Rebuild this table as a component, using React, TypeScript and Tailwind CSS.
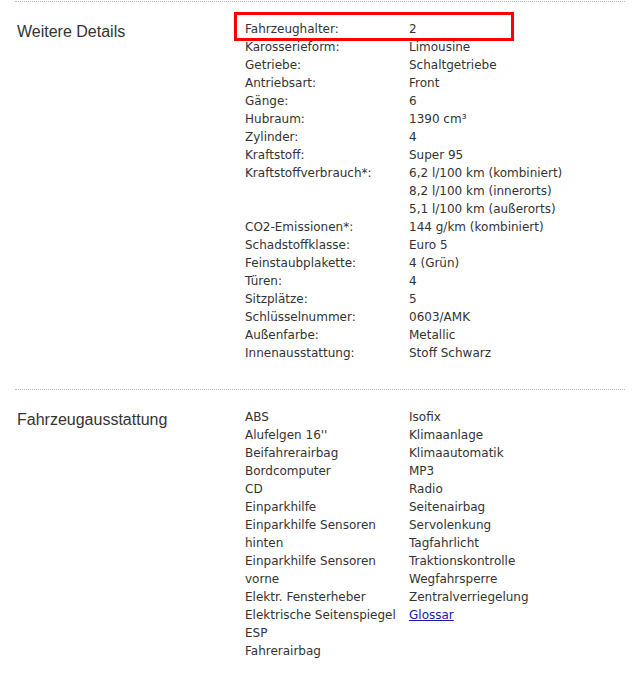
const details: [string, string[]][] = [
  ["Fahrzeughalter:", ["2"]],
  ["Karosserieform:", ["Limousine"]],
  ["Getriebe:", ["Schaltgetriebe"]],
  ["Antriebsart:", ["Front"]],
  ["Gänge:", ["6"]],
  ["Hubraum:", ["1390 cm³"]],
  ["Zylinder:", ["4"]],
  ["Kraftstoff:", ["Super 95"]],
  ["Kraftstoffverbrauch*:", ["6,2 l/100 km (kombiniert)", "8,2 l/100 km (innerorts)", "5,1 l/100 km (außerorts)"]],
  ["CO2-Emissionen*:", ["144 g/km (kombiniert)"]],
  ["Schadstoffklasse:", ["Euro 5"]],
  ["Feinstaubplakette:", ["4 (Grün)"]],
  ["Türen:", ["4"]],
  ["Sitzplätze:", ["5"]],
  ["Schlüsselnummer:", ["0603/AMK"]],
  ["Außenfarbe:", ["Metallic"]],
  ["Innenausstattung:", ["Stoff Schwarz"]],
];

const featuresLeft = [
  "ABS",
  "Alufelgen 16''",
  "Beifahrerairbag",
  "Bordcomputer",
  "CD",
  "Einparkhilfe",
  "Einparkhilfe Sensoren hinten",
  "Einparkhilfe Sensoren vorne",
  "Elektr. Fensterheber",
  "Elektrische Seitenspiegel",
  "ESP",
  "Fahrerairbag",
];

const featuresRight = [
  "Isofix",
  "Klimaanlage",
  "Klimaautomatik",
  "MP3",
  "Radio",
  "Seitenairbag",
  "Servolenkung",
  "Tagfahrlicht",
  "Traktionskontrolle",
  "Wegfahrsperre",
  "Zentralverriegelung",
];

export default function App() {
  return (
    <div className="relative w-[640px] h-[681px] bg-white text-[#333] font-['DejaVu_Sans',Verdana,sans-serif] text-[12px] leading-[18px]">
      <div className="mx-[15px] pt-px">
        {/* Weitere Details */}
        <div className="flex border-t border-dotted border-[#bbb] pt-[18px] pb-[27px]">
          <h2 className="w-[230px] shrink-0 pl-[2px] font-['Liberation_Sans',Arial,sans-serif] text-[16px] leading-[18px] text-[#333] pt-[3px]">
            Weitere Details
          </h2>
          <div className="grid grid-cols-[164px_1fr]">
            {details.map(([label, values]) => (
              <div key={label} className="contents">
                <div>{label}</div>
                <div>
                  {values.map((v) => (
                    <div key={v}>{v}</div>
                  ))}
                </div>
              </div>
            ))}
          </div>
        </div>

        {/* Fahrzeugausstattung */}
        <div className="flex border-t border-dotted border-[#bbb] pt-[18px]">
          <h2 className="w-[230px] shrink-0 pl-[2px] font-['Liberation_Sans',Arial,sans-serif] text-[16px] leading-[18px] text-[#333] pt-[3px]">
            Fahrzeugausstattung
          </h2>
          <div className="flex">
            <ul className="w-[164px] pr-[6px]">
              {featuresLeft.map((f) => (
                <li key={f}>{f}</li>
              ))}
            </ul>
            <ul className="w-[164px]">
              {featuresRight.map((f) => (
                <li key={f}>{f}</li>
              ))}
              <li>
                <a href="#" className="text-[#1a1aa6] underline">Glossar</a>
              </li>
            </ul>
          </div>
        </div>
      </div>

      {/* highlight box */}
      <div className="absolute left-[234px] top-[12px] w-[280px] h-[29px] border-[3px] border-[#f00]" />
    </div>
  );
}
